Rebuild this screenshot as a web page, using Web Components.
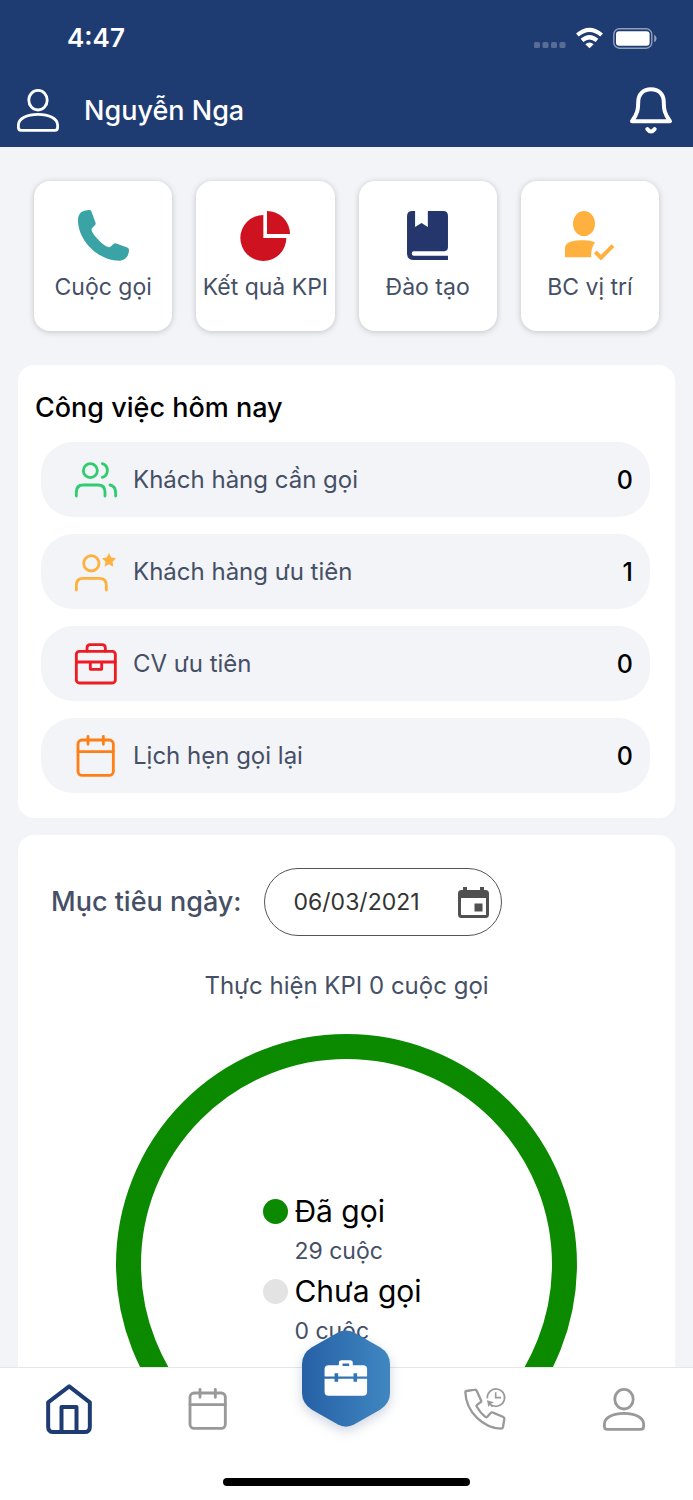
<!DOCTYPE html>
<html lang="vi">
<head>
<meta charset="utf-8">
<meta name="viewport" content="width=device-width, initial-scale=1">
<title>Trang chủ</title>
<style>
  html, body { margin: 0; height: 100%; }
  body {
    font-family: Inter, "Noto Sans", "Liberation Sans", sans-serif;
    --navy: #1f3c72;
    --slate: #454f66;
    --surface: #f3f4f7;
    --muted: #999;
    color: #000;
  }
</style>
</head>
<body>
<app-shell>
  <status-bar slot="top" time="4:47"></status-bar>
  <user-bar slot="top">Nguyễn Nga</user-bar>

  <action-grid>
    <action-card icon="phone" style="color:#3aa3a5">Cuộc gọi</action-card>
    <action-card icon="pie" style="color:#ce1220">Kết quả KPI</action-card>
    <action-card icon="book" style="color:#25366d">Đào tạo</action-card>
    <action-card icon="usercheck" style="color:#ffb13f">BC vị trí</action-card>
  </action-grid>

  <task-panel heading="Công việc hôm nay">
    <task-row icon="users" count="0" style="color:#2fcc70">Khách hàng cần gọi</task-row>
    <task-row icon="userstar" count="1" style="color:#ffb13f">Khách hàng ưu tiên</task-row>
    <task-row icon="briefcase" count="0" style="color:#ed1b24">CV ưu tiên</task-row>
    <task-row icon="calendar" count="0" style="color:#ff7f17">Lịch hẹn gọi lại</task-row>
  </task-panel>

  <goal-panel>
    <date-field value="06/03/2021">Mục tiêu ngày:</date-field>
    <span slot="summary">Thực hiện KPI 0 cuộc gọi</span>
    <kpi-ring slot="chart">
      <legend-item label="Đã gọi" style="color:#0b8a00">29 cuộc</legend-item>
      <legend-item label="Chưa gọi" style="color:#e3e3e3">0 cuộc</legend-item>
    </kpi-ring>
  </goal-panel>

  <tab-bar slot="bottom">
    <tab-item icon="home" label="Trang chủ" active></tab-item>
    <tab-item icon="calendar" label="Lịch"></tab-item>
    <tab-item icon="work" label="Công việc" raised></tab-item>
    <tab-item icon="callhistory" label="Lịch sử gọi"></tab-item>
    <tab-item icon="user" label="Tài khoản"></tab-item>
  </tab-bar>
</app-shell>

<script>
const line = (w, body) => `<g fill="none" stroke="currentColor" stroke-width="${w}" stroke-linecap="round" stroke-linejoin="round">${body}</g>`;
const fill = body => `<g fill="currentColor">${body}</g>`;

// name: [width, height, viewBox, drawing]
const ICONS = {
  user: [42, 43, '0 0 42 43', line(2.8, '<ellipse cx="21" cy="11.2" rx="9.2" ry="9.8"/><path d="M1.4 36C1.4 29.5 10 25.3 21 25.3S40.6 29.5 40.6 36V38.6Q40.6 41.4 37.8 41.4H4.2Q1.4 41.4 1.4 38.6Z"/>')],
  bell: [42, 47, '0 0 42 47', line(4, '<path d="M2 34.2C7.6 27 8.2 22 8.2 15.4C8.2 7 13.5 2.2 21 2.2S33.8 7 33.8 15.4C33.8 22 34.4 27 40 34.2Z"/><path d="M17.3 42Q21 47 24.7 42"/>')],
  dots: [32, 6, '0 0 32 6', '<g fill="#fff" fill-opacity=".25"><rect width="6" height="6" rx="1.6"/><rect x="8.5" width="6" height="6" rx="1.6"/><rect x="17" width="6" height="6" rx="1.6"/><rect x="25.5" width="6" height="6" rx="1.6"/></g>'],
  wifi: [27, 20, '0 0 27 20', '<g fill="none" stroke="currentColor" stroke-width="4.2"><path d="M1.4 7Q13.5 -3.2 25.6 7"/><path d="M6 12.4Q13.5 6 21 12.4"/></g><path fill="currentColor" d="M9.3 16.3Q13.5 12.9 17.7 16.3L13.5 20.3Z"/>'],
  battery: [44, 21, '0 0 44 21', '<rect x=".8" y=".8" width="38" height="19.4" rx="5.5" fill="none" stroke="#fff" stroke-opacity=".5" stroke-width="1.4"/><rect x="3" y="3.2" width="33.6" height="14.6" rx="3" fill="#fff"/><path d="M41.2 6.8Q43.6 8 43.6 10.5T41.2 14.2Z" fill="#fff" fill-opacity=".5"/>'],
  phone: [51, 51, '0 0 151 151', fill('<path d="M20 2Q27 0 33 0Q38 0 39.5 4L52 38Q53 42 50 45L42 53Q39 57 41 62C48 78 72 102 87 109Q93 112 97 108L105 101Q108 98 113 99L146 111Q151 113 151 118C151 136 140 150 122 150C60 150 0 90 0 30C0 14 8 4 20 2Z"/>')],
  pie: [50, 50, '0 0 150 150', fill('<path d="M70 12V81H139A69 69 0 1 1 70 12Z"/><path d="M81 0A69 69 0 0 1 150 69H81Z"/>')],
  book: [41, 49, '0 0 122 146', fill('<path d="M16 0H24V48L43 36L62 48V0H108Q122 0 122 14V108Q122 118 112 120H20Q14 120 14 126.5Q14 133 20 133H122V146H20Q0 146 0 126V16Q0 0 16 0Z"/>')],
  usercheck: [50, 50, '0 0 150 150', fill('<ellipse cx="57" cy="38" rx="33" ry="38"/><path d="M0 139V112C0 92 25 88 57 88Q78 88 90 94Q76 115 79 139Z"/>') + '<path d="M91 123L108 140L144 104" fill="none" stroke="currentColor" stroke-width="12"/>'],
  users: [42, 42, '0 0 126 126', line(8.5, '<circle cx="46" cy="35" r="21"/><path d="M82 14A21.5 21.5 0 0 1 82 55"/><path d="M4 111V99Q4 78 25 78H69Q90 78 90 99V111"/><path d="M105 78Q122 82 122 101V111"/>')],
  userstar: [42, 42, '0 0 126 126', line(8.5, '<circle cx="49" cy="37" r="23"/><path d="M4 117V103Q4 82 25 82H73Q94 82 94 103V117"/>') + fill('<path d="M102 6L108.5 19.5L123 21.5L112.5 32L115 47L102 40L89 47L91.5 32L81 21.5L95.5 19.5Z"/>')],
  briefcase: [42, 42, '0 0 126 126', line(8.5, '<rect x="4" y="25" width="117" height="95" rx="9"/><path d="M36 25V15Q36 5 46 5H81Q91 5 91 15V25M4 57H121M46 57V79H80V57"/>')],
  calendar: [42, 42, '0 0 126 126', line(8.5, '<rect x="9" y="15" width="106" height="106" rx="12"/><path d="M9 50H115M39 4V28M85 4V28"/>')],
  event: [31, 31, '0 0 31 31', fill('<path fill-rule="evenodd" d="M5 0H9V3H22V0H26V3H27.5Q31 3 31 6.5V27.5Q31 31 27.5 31H3.5Q0 31 0 27.5V6.5Q0 3 3.5 3H5ZM3 11V28H28V11Z"/><rect x="16.5" y="16.5" width="8" height="8"/>')],
  home: [46, 50, '0 0 137 150', line(12, '<path d="M6 55L69 7L131 55V128Q131 144 115 144H22Q6 144 6 128Z"/><path d="M46 144V69H91V144"/>')],
  callhistory: [42, 42, '0 0 126 126', line(7, '<path d="M4 12Q4 10 8 9L32 5Q36 4 38 8L51 37Q53 41 49 43L40 50Q36 53 39 57Q50 76 63 86Q67 89 70 86L80 75Q83 72 87 74L118 87Q122 89 121 93L117 117Q116 122 111 122C60 120 6 74 4 12Z"/>') + '<g fill="none" stroke="currentColor" stroke-width="5"><path d="M70 31A26 26 0 1 1 84 52"/><path d="M95 13V29H111"/></g>' + fill('<path d="M69 37L90 43L81 47L88 55L84 58L77 51L73 57Z"/>')],
  work: [88, 97, '0 0 265 290', '<defs><linearGradient id="hex" x1="0" x2="1"><stop stop-color="#2660a6"/><stop offset="1" stop-color="#4087c1"/></linearGradient></defs><path fill="url(#hex)" d="M107 7Q132 -6 158 7L235 51Q265 69 265 102V188Q265 221 235 239L158 283Q132 297 107 283L30 239Q0 221 0 188V102Q0 69 30 51Z"/><path fill="#fff" fill-rule="evenodd" d="M111 105V98Q111 90 119 90H145Q153 90 153 98V105H184Q196 105 196 117V139H166V129H155V139H109V129H98V139H68V117Q68 105 80 105ZM122 100V107H142V100ZM68 146H98V155H109V146H155V155H166V146H196V185Q196 197 184 197H80Q68 197 68 185Z"/>'],
};

function define(name, markup, setup) {
  const template = document.createElement('template');
  template.innerHTML = markup;
  customElements.define(name, class extends HTMLElement {
    connectedCallback() {
      if (this.shadowRoot) return;
      const root = this.attachShadow({ mode: 'open' });
      root.append(template.content.cloneNode(true));
      if (setup) setup(root, this);
    }
  });
}

define('ui-icon', `<style>:host{display:block;flex:none}svg{display:block;overflow:visible}</style>`, (root, el) => {
  const [w, h, box, body] = ICONS[el.getAttribute('name')];
  root.innerHTML += `<svg width="${w}" height="${h}" viewBox="${box}" aria-hidden="true">${body}</svg>`;
});

define('app-shell', `
<style>
  :host{display:flex;flex-direction:column;height:100vh;background:var(--surface)}
  header{flex:none;background:var(--navy);color:#fff}
  main{flex:1;min-height:0;overflow-y:auto;scrollbar-width:none;padding:34px 18px 0}
  main::-webkit-scrollbar{display:none}
  footer{flex:none;position:relative}
</style>
<header><slot name="top"></slot></header>
<main><slot></slot></main>
<footer><slot name="bottom"></slot></footer>`);

define('status-bar', `
<style>
  :host{display:flex;justify-content:space-between;align-items:center;height:76px;padding:0 36px 0 67px}
  time{font-size:26px;line-height:32px;font-weight:600}
  div{display:flex;align-items:center;gap:10px}
  .dots{align-self:flex-end;padding-bottom:1px}
</style>
<time></time>
<div><ui-icon class="dots" name="dots"></ui-icon><ui-icon name="wifi"></ui-icon><ui-icon name="battery"></ui-icon></div>`,
(root, el) => { root.querySelector('time').textContent = el.getAttribute('time'); });

define('user-bar', `
<style>
  :host{box-sizing:border-box;display:flex;align-items:center;height:71px;padding:0 21px 2px 17px}
  a{display:flex;align-items:center;gap:25px;flex:1;color:inherit;text-decoration:none;font-size:27px;line-height:36px;font-weight:500}
  button{border:0;background:none;padding:0;color:inherit}
</style>
<a href="#profile"><ui-icon name="user"></ui-icon><span><slot></slot></span></a>
<button aria-label="Thông báo"><ui-icon name="bell"></ui-icon></button>`);

define('action-grid', `
<style>:host{display:grid;grid-template-columns:repeat(4,minmax(0,1fr));gap:24px;padding:0 16px;margin-bottom:34px}</style>
<slot></slot>`);

define('action-card', `
<style>
  :host{display:block}
  button{display:flex;flex-direction:column;align-items:center;width:100%;height:150px;padding:29px 0 0;border:0;border-radius:16px;background:#fff;color:inherit;font:inherit;box-shadow:0 1px 6px rgba(0,0,0,.2)}
  .pic{display:grid;justify-items:center;align-items:center;height:51px}
  .label{margin-top:10px;color:var(--slate);font-size:23px;line-height:32px;white-space:nowrap}
</style>
<button><span class="pic"></span><span class="label"><slot></slot></span></button>`,
(root, el) => { root.querySelector('.pic').innerHTML = `<ui-icon name="${el.getAttribute('icon')}"></ui-icon>`; });

define('task-panel', `
<style>
  :host{display:block;background:#fff;border-radius:16px;padding:25px 25px 25px 23px;margin-bottom:17px}
  h2{margin:0 0 16px -6px;font-size:27px;line-height:36px;font-weight:500}
  .list{display:grid;gap:17px}
</style>
<h2></h2><div class="list"><slot></slot></div>`,
(root, el) => { root.querySelector('h2').textContent = el.getAttribute('heading'); });

define('task-row', `
<style>
  :host{display:block}
  a{display:flex;align-items:center;height:75px;padding:0 17px 0 34px;border-radius:32px;background:var(--surface);color:inherit;text-decoration:none;font-size:24px;line-height:32px}
  .label{flex:1;margin-left:16px;color:var(--slate)}
  .count{color:#000;font-size:25px;font-weight:500}
</style>
<a href="#tasks"><span class="pic"></span><span class="label"><slot></slot></span><span class="count"></span></a>`,
(root, el) => {
  root.querySelector('.pic').innerHTML = `<ui-icon name="${el.getAttribute('icon')}"></ui-icon>`;
  root.querySelector('.count').textContent = el.getAttribute('count');
});

define('goal-panel', `
<style>
  :host{display:block;background:#fff;border-radius:16px 16px 0 0;padding:33px 33px 40px}
  p{margin:34px 0 32px;text-align:center;color:var(--slate);font-size:24px;line-height:32px}
</style>
<slot></slot><p><slot name="summary"></slot></p><slot name="chart"></slot>`);

define('date-field', `
<style>
  :host{display:flex;align-items:center;gap:22px}
  label{color:var(--slate);font-size:27px;line-height:36px;font-weight:500;white-space:nowrap}
  .box{box-sizing:border-box;display:flex;align-items:center;width:238px;height:68px;padding:0 12px 0 29px;border:1px solid #555;border-radius:34px}
  input{flex:1;min-width:0;padding:0;border:0;outline:0;background:none;color:#333;font:inherit;font-size:23px;line-height:32px}
  button{padding:0;border:0;background:none;color:#505050}
</style>
<label for="day"><slot></slot></label>
<div class="box"><input id="day" type="text" inputmode="numeric"><button aria-label="Chọn ngày"><ui-icon name="event"></ui-icon></button></div>`,
(root, el) => {
  const input = root.querySelector('input');
  input.value = el.getAttribute('value');
  input.setAttribute('aria-label', el.textContent.trim());
});

define('kpi-ring', `
<style>
  :host{display:grid;width:78%;margin:0 auto}
  svg,.legend{grid-area:1/1}
  svg{display:block;width:100%}
  .legend{place-self:center;padding:14px 8px 0 0}
</style>
<svg viewBox="0 0 461 461" aria-hidden="true"><circle cx="230.5" cy="230.5" r="218" fill="none" stroke="#0b8a00" stroke-width="25"/></svg>
<div class="legend"><slot></slot></div>`);

define('legend-item', `
<style>
  :host{display:grid;grid-template-columns:25px auto;column-gap:6px;align-items:center}
  i{width:25px;height:25px;border-radius:50%;background:currentColor}
  b{color:#000;font-size:30px;line-height:40px;font-weight:400}
  span{grid-column:2;color:var(--slate);font-size:23px;line-height:40px}
</style>
<i></i><b></b><span><slot></slot></span>`,
(root, el) => { root.querySelector('b').textContent = el.getAttribute('label'); });

define('tab-bar', `
<style>
  :host{display:block;background:#fff;border-top:1px solid #e6e6e8;padding-bottom:14px}
  nav{display:grid;grid-template-columns:repeat(5,1fr);height:82px}
  .home{width:247px;height:8px;margin:28px auto 0;border-radius:4px;background:#000}
</style>
<nav><slot></slot></nav><div class="home"></div>`);

define('tab-item', `
<style>
  :host{display:grid;place-items:center;color:var(--muted)}
  :host([active]){color:var(--navy)}
  :host([raised]){align-self:start;margin-top:-38px}
  :host([raised]) a{filter:drop-shadow(0 4px 6px rgba(30,60,110,.22))}
  a{display:block;color:inherit}
</style>
<a></a>`,
(root, el) => {
  const link = root.querySelector('a');
  link.href = '#' + el.getAttribute('icon');
  link.setAttribute('aria-label', el.getAttribute('label'));
  link.innerHTML = `<ui-icon name="${el.getAttribute('icon')}"></ui-icon>`;
});
</script>
</body>
</html>
